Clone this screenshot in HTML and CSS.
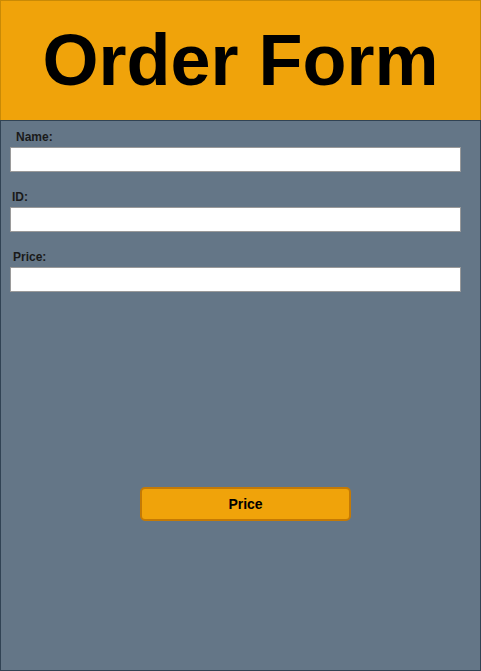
FILE: index.html
```html
<!DOCTYPE html>
<html>
<head>
<meta charset="utf-8">
<link rel="stylesheet" href="styles.css">
</head>
<body>
<div class="page">
  <header class="header"><h1 class="title">Order Form</h1></header>
  <main class="panel">
    <div class="field">
      <label class="label label-name">Name:</label>
      <input class="input" type="text">
    </div>
    <div class="field">
      <label class="label label-id">ID:</label>
      <input class="input" type="text">
    </div>
    <div class="field">
      <label class="label label-price">Price:</label>
      <input class="input" type="text">
    </div>
    <button class="btn">Price</button>
  </main>
</div>
</body>
</html>
```
FILE: styles.css
```css
* { box-sizing: border-box; }
html, body { margin: 0; padding: 0; }
body { font-family: "Liberation Sans", Arial, sans-serif; background: #647687; }
.page { width: 481px; height: 671px; display: flex; flex-direction: column; }
.header {
  height: 120px;
  flex: none;
  background: #f0a30a;
  border: 1px solid #c98a06;
  border-bottom: none;
  display: flex;
  align-items: center;
  justify-content: center;
}
.title {
  margin: 0;
  font-size: 72px;
  font-weight: bold;
  color: #000;
  line-height: 83px;
  margin-top: -1px;
}
.panel {
  flex: 1;
  background: #647687;
  border: 1px solid #314354;
  padding: 10px 19px 0 9px;
  display: flex;
  flex-direction: column;
}
.field { display: flex; flex-direction: column; margin-bottom: 19px; }
.label {
  font-size: 12px;
  font-weight: bold;
  line-height: 13px;
  color: #1a1a1a;
  margin-bottom: 3px;
}
.label-name { padding-left: 6px; }
.label-id { padding-left: 2px; }
.label-price { padding-left: 3px; }
.input {
  width: 451px;
  height: 25px;
  border: 1px solid #9a9a9a;
  background: #fff;
  margin: 0;
  padding: 0 4px;
  outline: none;
}
.btn {
  margin-top: 176px;
  margin-left: 130px;
  width: 211px;
  height: 34px;
  background: #f0a30a;
  border: 2px solid #c47a05;
  border-radius: 5px;
  font-family: "Liberation Sans", Arial, sans-serif;
  font-size: 14px;
  font-weight: bold;
  color: #000;
  padding: 0;
}
```
